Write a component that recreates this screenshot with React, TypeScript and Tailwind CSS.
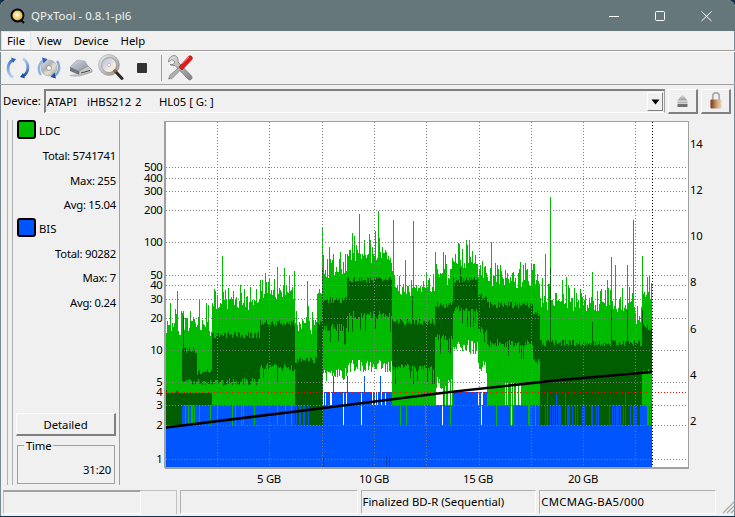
import React from "react";

type R = { a: number; b: number; lt: number; dt: number; db: number; lb: number; bt: number; p: number; d2?: [number, number]; w?: number };

const regions: R[] = [
  { a: 166, b: 182, lt: 325, dt: 393, db: 425, lb: 425, bt: 425, p: 0 },
  { a: 182, b: 197, lt: 320, dt: 350, db: 382, lb: 425, bt: 405, p: 0.75, d2: [393, 405] },
  { a: 197, b: 212, lt: 325, dt: 372, db: 382, lb: 425, bt: 405, p: 0.75, d2: [393, 405] },
  { a: 212, b: 260, lt: 298, dt: 335, db: 382, lb: 425, bt: 405, p: 0.85 },
  { a: 260, b: 295, lt: 288, dt: 323, db: 367, lb: 425, bt: 405, p: 0.85 },
  { a: 295, b: 317, lt: 323, dt: 360, db: 425, lb: 425, bt: 405, p: 0.25 },
  { a: 317, b: 323, lt: 290, dt: 322, db: 425, lb: 425, bt: 405, p: 0.2 },
  { a: 323, b: 347, lt: 267, dt: 300, db: 327, lb: 375, bt: 392, p: 0.85, w: 1 },
  { a: 347, b: 392, lt: 252, dt: 280, db: 315, lb: 366, bt: 392, p: 0.85, w: 1 },
  { a: 392, b: 435, lt: 286, dt: 322, db: 367, lb: 425, bt: 405, p: 0.85 },
  { a: 435, b: 453, lt: 273, dt: 305, db: 337, lb: 383, bt: 405, p: 0.45, w: 1 },
  { a: 453, b: 478, lt: 258, dt: 280, db: 310, lb: 347, bt: 392, p: 1, w: 1 },
  { a: 478, b: 487, lt: 270, dt: 296, db: 330, lb: 367, bt: 392, p: 0.8, w: 1 },
  { a: 487, b: 533, lt: 277, dt: 305, db: 343, lb: 425, bt: 405, p: 0.9 },
  { a: 533, b: 540, lt: 277, dt: 313, db: 360, lb: 425, bt: 405, p: 0.5 },
  { a: 540, b: 635, lt: 300, dt: 343, db: 425, lb: 425, bt: 405, p: 0.3 },
  { a: 635, b: 642, lt: 315, dt: 343, db: 425, lb: 425, bt: 405, p: 0.4 },
  { a: 642, b: 652, lt: 292, dt: 327, db: 372, lb: 425, bt: 405, p: 0.5 },
];

const lightSpikes: Record<number, number> = {
  170: 303, 177: 291, 199: 300, 222: 256, 240: 285, 262: 280, 277: 267, 284: 268, 307: 281, 322: 228, 329: 247,
  359: 214, 378: 211, 393: 220, 405: 260, 413: 221, 545: 254, 550: 197, 592: 272, 611: 257, 615: 265, 627: 265, 633: 220, 642: 256,
  435: 252, 491: 242, 345: 254, 445: 255, 520: 262,
};
const darkSpikes: Record<number, number> = { 183: 316, 322: 268, 550: 268, 611: 310, 627: 310, 642: 310, 412: 296, 460: 268, 592: 322 };
const midStripes = [168, 170, 172, 197, 203, 207, 210, 212];

function build() {
  let s = 1234567;
  const rnd = () => {
    s = (s * 1664525 + 1013904223) >>> 0;
    return s / 4294967296;
  };
  let light = "";
  let dark = "";
  let blue = "";
  let navy = "";
  for (let x = 166; x < 652; x++) {
    const r = regions.find((q) => x >= q.a && x < q.b);
    if (!r) continue;
    const px = x + 0.5;
    let lt = r.lt + rnd() * 12 - Math.pow(rnd(), 3) * 24;
    if (lightSpikes[x]) lt = lightSpikes[x];
    let lb = r.lb + (r.lb < 400 ? rnd() * 14 - 7 : 0);
    if (r.a === 487 && x >= 505 && x <= 520 && rnd() < 0.5) lb = 383;
    if (r.a === 435 && rnd() > 0.55) lb = 425;
    light += `M${px} ${lt.toFixed(0)}V${lb.toFixed(0)}`;
    let dt = r.dt + rnd() * 7 - 3.5;
    if (darkSpikes[x]) dt = darkSpikes[x];
    let db = r.db + (r.db < 420 ? rnd() * 8 - 4 : 0);
    if (r.db < 372 && rnd() < 0.08) db += 14;
    dark += `M${px} ${dt.toFixed(0)}V${db.toFixed(0)}`;
    if (r.d2) dark += `M${px} ${r.d2[0]}V${r.d2[1]}`;
    if (x < 182) dark += `M${px} 393V425`;
    let bt = 425;
    if (rnd() < r.p) bt = r.bt;
    else if (r.w && rnd() < 0.85) bt = 405;
    if (x >= 540 && rnd() < 0.05) bt = 392;
    if (x > 433 && x < 453 && rnd() < 0.15) bt = 392;
    if (x > 323 && x < 392 && rnd() < 0.06) bt = 376;
    blue += `M${px} ${bt}V467`;
    if (midStripes.includes(x)) dark += `M${px} 425V457`;
    if (x === 298) light += `M${px} 425V457`;
    if (x === 323 || x === 386 || x === 389) navy += `M${px} 457V467`;
  }
  return { light, dark, blue, navy };
}
const bars = build();

const yGrid = [167, 178, 191, 210, 242, 275, 285, 299, 318, 350, 382, 405, 425, 459];
const xGrid = [217, 269, 322, 374, 426, 479, 531, 583, 635];
const leftLabels: [string, number][] = [["500", 167], ["400", 178], ["300", 191], ["200", 210], ["100", 242], ["50", 275], ["40", 285], ["30", 299], ["20", 318], ["10", 350], ["5", 382], ["4", 392], ["3", 405], ["2", 425], ["1", 459]];
const rightLabels: [string, number][] = [["14", 144], ["12", 190], ["10", 236], ["8", 282], ["6", 329], ["4", 375], ["2", 421]];
const xLabels: [string, number][] = [["5 GB", 269], ["10 GB", 374], ["15 GB", 478], ["20 GB", 583]];

function Chart() {
  return (
    <svg width={615} height={369} viewBox="120 118 615 369" className="block shrink-0">
      <rect x={165} y={121} width={523} height={347} fill="#ffffff" />
      <g shapeRendering="crispEdges" strokeWidth={1} fill="none">
        <path d={bars.light} stroke="#00bb00" />
        <path d={bars.dark} stroke="#005d00" />
        <path d={bars.blue} stroke="#0055ff" />
        <path d={bars.navy} stroke="#003c9c" />
        {yGrid.map((y) => (
          <line key={y} x1={166} x2={687} y1={y + 0.5} y2={y + 0.5} stroke="#808080" strokeDasharray="1 2" />
        ))}
        {xGrid.map((x) => (
          <line key={x} x1={x + 0.5} x2={x + 0.5} y1={122} y2={467} stroke="#808080" strokeDasharray="1 2" />
        ))}
        <line x1={166} x2={687} y1={392.5} y2={392.5} stroke="#ff0000" strokeDasharray="1 2" />
        <line x1={652.5} x2={652.5} y1={122} y2={467} stroke="#000000" strokeDasharray="1 2" />
      </g>
      <path d="M166 427.5 L300 411 L450 392 L560 380 L652 372" stroke="#000000" strokeWidth={2.6} fill="none" />
      <rect x={165} y={121} width={523} height={347} fill="none" stroke="#a0a0a0" strokeWidth={1} shapeRendering="crispEdges" />
      <line x1={165} x2={165} y1={121} y2={468} stroke="#a0a0a0" strokeWidth={2} shapeRendering="crispEdges" />
      <line x1={165} x2={688} y1={468} y2={468} stroke="#a0a0a0" strokeWidth={2} shapeRendering="crispEdges" />
      <g fontSize={11.3} letterSpacing={-0.3} fill="#000000" fontFamily="'Noto Sans', sans-serif">
        {leftLabels.map(([t, y]) => (
          <text key={t} x={162.5} y={y + 4} textAnchor="end">{t}</text>
        ))}
        {rightLabels.map(([t, y]) => (
          <text key={t} x={690} y={y + 4}>{t}</text>
        ))}
        {xLabels.map(([t, x]) => (
          <text key={t} x={x} y={483} textAnchor="middle">{t}</text>
        ))}
      </g>
    </svg>
  );
}

function AppIcon() {
  return (
    <svg width={16} height={16} viewBox="0 0 16 16" className="shrink-0">
      <defs>
        <radialGradient id="appg" cx="0.45" cy="0.45" r="0.6">
          <stop offset="0" stopColor="#fff6d0" />
          <stop offset="0.6" stopColor="#f3c65a" />
          <stop offset="1" stopColor="#d58f1d" />
        </radialGradient>
      </defs>
      <circle cx="7.5" cy="7.5" r="6" fill="url(#appg)" stroke="#000000" strokeWidth="1.8" />
      <circle cx="7.5" cy="7" r="1.5" fill="#fffbe8" />
      <path d="M10.5 11.5 L14 15" stroke="#000000" strokeWidth="2" />
    </svg>
  );
}

function RefreshIcon() {
  return (
    <svg width={24} height={24} viewBox="0 0 24 24">
      <defs>
        <linearGradient id="r1" x1="0" y1="0" x2="0" y2="1">
          <stop offset="0" stopColor="#3f78c8" />
          <stop offset="1" stopColor="#bcd6f2" />
        </linearGradient>
        <linearGradient id="r2" x1="0" y1="0" x2="0" y2="1">
          <stop offset="0" stopColor="#bcd6f2" />
          <stop offset="1" stopColor="#1e4fa3" />
        </linearGradient>
      </defs>
      <path d="M7 4 C1 7 0 17 7 21.5" fill="none" stroke="url(#r1)" strokeWidth="2.8" />
      <path d="M5 1.5 L10 3 L7 7 Z" fill="#2f66b8" />
      <path d="M17 20 C23 17 24 7 17 2.5" fill="none" stroke="url(#r2)" strokeWidth="2.8" />
      <path d="M19 22.5 L14 21 L17 17 Z" fill="#1e4fa3" />
    </svg>
  );
}

function CdIcon() {
  return (
    <svg width={24} height={24} viewBox="0 0 24 24">
      <defs>
        <linearGradient id="cd1" x1="0" y1="0" x2="1" y2="1">
          <stop offset="0" stopColor="#e8e8e8" />
          <stop offset="0.4" stopColor="#b0b0b8" />
          <stop offset="0.6" stopColor="#e6e0cc" />
          <stop offset="1" stopColor="#8f9298" />
        </linearGradient>
      </defs>
      <circle cx="12" cy="12" r="8" fill="url(#cd1)" stroke="#9a9a9a" strokeWidth="0.5" />
      <circle cx="12" cy="12" r="2.5" fill="#f5f5f5" stroke="#808080" strokeWidth="0.7" />
      <path d="M7 4 A10 10 0 0 0 4 19" fill="none" stroke="#8db4e4" strokeWidth="2.4" />
      <path d="M5 1.5 L10.5 3 L6.5 7.5 Z" fill="#2b62b8" />
      <path d="M17 20 A10 10 0 0 0 20 5" fill="none" stroke="#7ea6da" strokeWidth="2.4" />
      <path d="M19 22.5 L13.5 21 L17.5 16.5 Z" fill="#1e4fa3" />
    </svg>
  );
}

function DriveIcon() {
  return (
    <svg width={25} height={20} viewBox="0 0 25 20">
      <defs>
        <linearGradient id="dr1" x1="0" y1="0" x2="1" y2="1">
          <stop offset="0" stopColor="#d4d9e2" />
          <stop offset="1" stopColor="#8a93a0" />
        </linearGradient>
      </defs>
      <path d="M2 9 L9 2 L17 3 L20 8 L11 13 Z" fill="url(#dr1)" stroke="#9a9fa8" strokeWidth="0.5" />
      <path d="M2 9 L11 13 L11 17 L2 13 Z" fill="#70757e" />
      <path d="M11 13 L20 8 L24 12 L24 14 L11 18 Z" fill="#c8c8c8" stroke="#666666" strokeWidth="0.5" />
      <path d="M13 15 L22 12.5" stroke="#444444" strokeWidth="1" />
      <ellipse cx="7" cy="17.5" rx="6" ry="1.2" fill="#bdbdbd" />
    </svg>
  );
}

function ScanIcon() {
  return (
    <svg width={26} height={27} viewBox="0 0 26 27">
      <defs>
        <linearGradient id="sc1" x1="0" y1="0" x2="1" y2="1">
          <stop offset="0" stopColor="#f0f0f0" />
          <stop offset="1" stopColor="#8c8c8c" />
        </linearGradient>
        <linearGradient id="sc2" x1="0" y1="0" x2="1" y2="1">
          <stop offset="0" stopColor="#8fd0a0" />
          <stop offset="0.35" stopColor="#d6d0e8" />
          <stop offset="0.7" stopColor="#f3efe0" />
          <stop offset="1" stopColor="#d8d8d8" />
        </linearGradient>
      </defs>
      <circle cx="11" cy="11" r="10.5" fill="url(#sc1)" stroke="#9a9a9a" strokeWidth="0.5" />
      <circle cx="11" cy="11" r="7.5" fill="url(#sc2)" stroke="#8a8a8a" strokeWidth="0.6" />
      <circle cx="11" cy="11" r="1.6" fill="#ffffff" stroke="#999999" strokeWidth="0.5" />
      <path d="M17 17 L24 24.5" stroke="#2a2a2a" strokeWidth="3" strokeLinecap="round" />
      <path d="M16 16 L18 18" stroke="#a06a2a" strokeWidth="2.5" />
    </svg>
  );
}

function ToolsIcon() {
  return (
    <svg width={26} height={27} viewBox="0 0 26 27">
      <defs>
        <linearGradient id="tl1" x1="0" y1="0" x2="1" y2="1">
          <stop offset="0" stopColor="#e4e4e4" />
          <stop offset="1" stopColor="#808080" />
        </linearGradient>
      </defs>
      <path d="M8 1.5 A6 6 0 0 0 1.5 8 L5 5.5 L8 8 L6 10.5 L3 10.5 A6 6 0 0 0 8 11.5 L21 25 A2.2 2.2 0 0 0 24.5 22 L11 8 A6 6 0 0 0 8 1.5 Z" fill="url(#tl1)" stroke="#707070" strokeWidth="0.7" />
      <path d="M1.5 25 L3 21 L12 13.5 L14 15.5 L5 24.5 Z" fill="#b0b0b0" stroke="#707070" strokeWidth="0.6" />
      <path d="M12 13 L22 2 A2.4 2.4 0 0 1 25 5.5 L15 16 Z" fill="#dd1c1c" stroke="#9a1010" strokeWidth="0.6" />
      <path d="M15 9.5 L22 3" stroke="#ff8a8a" strokeWidth="1" />
    </svg>
  );
}

function EjectIcon() {
  return (
    <svg width={11} height={13} viewBox="0 0 11 13">
      <defs>
        <linearGradient id="ej" x1="0" y1="0" x2="0" y2="1">
          <stop offset="0" stopColor="#e2e2e2" />
          <stop offset="1" stopColor="#9a9a9a" />
        </linearGradient>
      </defs>
      <path d="M5.5 0.5 L10.5 6.5 L0.5 6.5 Z" fill="url(#ej)" />
      <rect x="0.5" y="7.5" width="10" height="2" fill="#b4b4b4" />
      <rect x="0.5" y="10" width="10" height="3" fill="#707070" />
    </svg>
  );
}

function LockIcon() {
  return (
    <svg width={12} height={17} viewBox="0 0 12 17">
      <defs>
        <linearGradient id="lk" x1="0" y1="0" x2="1" y2="0">
          <stop offset="0" stopColor="#7b2f1a" />
          <stop offset="0.55" stopColor="#c8a070" />
          <stop offset="1" stopColor="#e8d8b8" />
        </linearGradient>
      </defs>
      <path d="M2.8 8 V4 A3.2 3.2 0 0 1 9.2 4 V8" fill="none" stroke="#a8a8a8" strokeWidth="1.7" />
      <rect x="0.5" y="7.5" width="11" height="9" fill="url(#lk)" rx="1" />
    </svg>
  );
}

function Stat({ label, value }: { label: string; value: string }) {
  return (
    <div className="h-[24.5px] flex items-center justify-end pr-[3px] tracking-[-0.25px]">
      {label}: {value}
    </div>
  );
}

function Swatch({ color, label }: { color: string; label: string }) {
  return (
    <div className="h-[24px] flex items-start gap-[3px] pl-[4px]">
      <div className={`w-[19px] h-[19px] rounded-[3px] border-2 border-black ${color}`} />
      <span className="pt-[3px]">{label}</span>
    </div>
  );
}

export default function App() {
  return (
    <div className="w-[735px] h-[517px] overflow-hidden bg-[#14304a] text-[11.3px] leading-[16px] text-black font-['Noto_Sans','Liberation_Sans',sans-serif]">
      <div className="w-[735px] h-[516px] rounded-t-[8px] overflow-hidden bg-[#f0f0f0] shadow-[inset_1px_0_0_#7b8a8e,inset_-1px_0_0_#7b8a8e] flex flex-col">
        {/* title bar */}
        <div className="h-[31px] shrink-0 bg-[#66777b] flex items-center text-[#eef2f3]">
          <div className="ml-[10px] mr-[5px] mt-[1px]"><AppIcon /></div>
          <span className="text-[11.5px]">QPxTool - 0.8.1-pl6</span>
          <div className="ml-auto flex items-center">
            <svg width={46} height={12} viewBox="0 0 46 12" className="block"><path d="M13 6.5 H23" stroke="#ffffff" strokeWidth="1" /></svg>
            <svg width={46} height={12} viewBox="0 0 46 12" className="block"><rect x="13.5" y="1.5" width="9" height="9" rx="1" fill="none" stroke="#ffffff" strokeWidth="1" /></svg>
            <svg width={46} height={12} viewBox="0 0 46 12" className="block mr-[1px]"><path d="M13.5 1.5 L23.5 11 M23.5 1.5 L13.5 11" stroke="#ffffff" strokeWidth="1" /></svg>
          </div>
        </div>
        {/* menu */}
        <div className="h-[19px] shrink-0 flex items-center pl-[1px]">
          <div className="h-[19px] w-[30px] flex items-center justify-center bg-[#f6f6f6] border border-[#e0e0e0]">File</div>
          <span className="ml-[6px]">View</span>
          <span className="ml-[12px]">Device</span>
          <span className="ml-[12px]">Help</span>
        </div>
        {/* toolbar */}
        <div className="h-[35px] shrink-0 border-t border-t-[#a0a0a0] border-b border-b-[#a0a0a0] shadow-[inset_0_1px_0_#ffffff] flex items-center pl-[6px]">
          <div className="flex items-center mr-[7px]"><RefreshIcon /></div>
          <div className="flex items-center mr-[7px]"><CdIcon /></div>
          <div className="flex items-center mr-[5px]"><DriveIcon /></div>
          <div className="flex items-center mr-[13px]"><ScanIcon /></div>
          <div className="w-[10px] h-[10px] bg-[#333333] rounded-[1px] mr-[14px]" />
          <div className="w-[1px] h-[26px] bg-[#a0a0a0] mr-[5px]" />
          <ToolsIcon />
        </div>
        {/* device row */}
        <div className="h-[33px] shrink-0 flex items-center pl-[3px] pr-[4px] pb-[1px]">
          <span className="w-[40px] shrink-0">Device:</span>
          <div className="ml-[1px] h-[24px] w-[623px] flex items-center justify-between border-t-2 border-l-2 border-t-[#808080] border-l-[#808080] border-r border-r-[#a0a0a0] border-b border-b-white pl-[1px] pr-[1px]">
            <div className="flex">
              <span className="w-[40px]">ATAPI</span>
              <span className="w-[48px]">iHBS212</span>
              <span className="w-[24px]">2</span>
              <span>HL05 [ G: ]</span>
            </div>
            <div className="w-[16px] h-[19px] flex items-center justify-center bg-[#f0f0f0] border-t border-l border-white border-r border-b border-r-[#808080] border-b-[#808080]">
              <svg width={9} height={6} viewBox="0 0 9 6"><path d="M0.5 0.5 H8.5 L4.5 5.5 Z" fill="#000000" /></svg>
            </div>
          </div>
          <div className="ml-[3px] w-[30px] h-[25px] flex items-center justify-center border-t border-l border-white border-r-2 border-b-2 border-r-[#808080] border-b-[#808080]"><EjectIcon /></div>
          <div className="ml-[3px] w-[30px] h-[25px] flex items-center justify-center border-t border-l border-white border-r-2 border-b-2 border-r-[#808080] border-b-[#808080]"><LockIcon /></div>
        </div>
        {/* main */}
        <div className="h-[369px] shrink-0 flex">
          <div className="w-[120px] shrink-0 flex pl-[7px] pt-[2px]">
            <div className="w-[6px] h-[365px] border-l border-r border-[#b0b0b0]" />
            <div className="w-[107px] h-[365px] border-r border-[#a0a0a0] flex flex-col">
              <Swatch color="bg-[#00bb00]" label="LDC" />
              <Stat label="Total" value="5741741" />
              <Stat label="Max" value="255" />
              <Stat label="Avg" value="15.04" />
              <Swatch color="bg-[#0055ff]" label="BIS" />
              <Stat label="Total" value="90282" />
              <Stat label="Max" value="7" />
              <Stat label="Avg" value="0.24" />
              <div className="mt-auto ml-[3px] w-[100px] h-[23px] pt-[1px] flex items-center justify-center bg-[#f0f0f0] border-t border-l border-white border-r-2 border-b-2 border-r-[#808080] border-b-[#808080]">Detailed</div>
              <div className="relative mt-[9px] ml-[4px] w-[98px] h-[39px] mb-[1px] border border-[#a0a0a0] flex items-end justify-end pr-[3px] pb-[5px] tracking-[-0.2px]">
                <span className="absolute left-[6px] -top-[8px] px-[2px] bg-[#f0f0f0]">Time</span>
                <span>31:20</span>
              </div>
            </div>
          </div>
          <Chart />
        </div>
        {/* status bar */}
        <div className="h-[25px] mt-[3px] shrink-0 flex pl-[3px]">
          <div className="w-[138px] h-[24px] border-t-2 border-l border-t-[#a0a0a0] border-l-[#c0c0c0] border-r border-b border-white" />
          <div className="w-[36px] h-[24px] border-t border-t-[#c0c0c0] border-r border-r-[#c0c0c0]" />
          <div className="ml-[3px] w-[178px] h-[24px] border-t border-l border-[#b0b0b0] border-r border-b border-r-white border-b-white" />
          <div className="ml-[3px] w-[176px] h-[24px] flex items-center pl-[1px] border-t border-l border-[#b0b0b0] border-r border-b border-r-white border-b-white">Finalized BD-R (Sequential)</div>
          <div className="ml-[3px] w-[177px] h-[24px] flex items-center pl-[1px] tracking-[0.35px] border-t border-l border-[#b0b0b0] border-r border-b border-r-white border-b-white">CMCMAG-BA5/000</div>
          <svg width={14} height={14} viewBox="0 0 14 14" className="ml-[5px] self-end mb-[1px]">
            <path d="M13 2 L2 13 M13 6 L6 13 M13 10 L10 13" stroke="#a8a8a8" strokeWidth="1.2" />
          </svg>
        </div>
      </div>
    </div>
  );
}
